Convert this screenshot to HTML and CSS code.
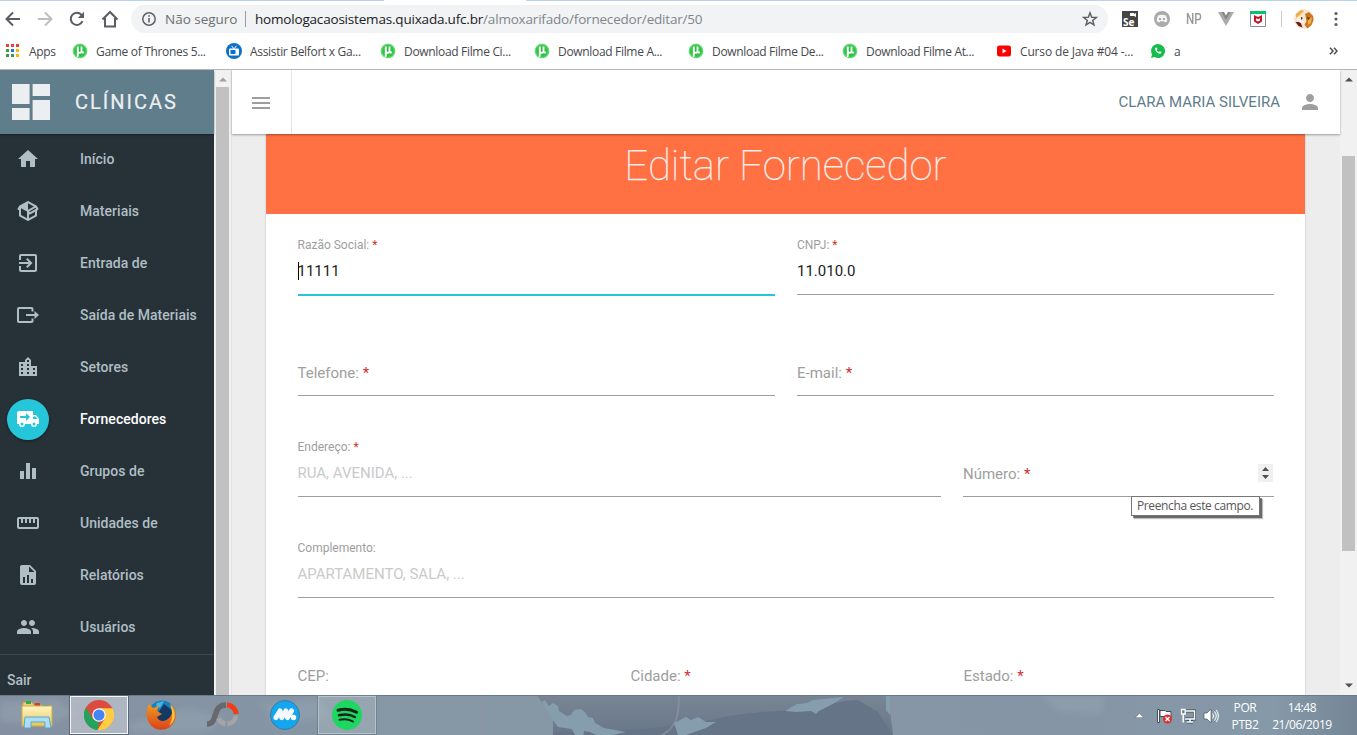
FILE: index.html
```html
<!DOCTYPE html>
<html lang="pt-BR">
<head>
<meta charset="utf-8">
<title>Editar Fornecedor</title>
<link rel="stylesheet" href="styles.css">
</head>
<body>
<svg class="defs" width="0" height="0" aria-hidden="true">
  <defs>
    <radialGradient id="green"><stop offset="0" stop-color="#1fae2f"/><stop offset=".75" stop-color="#35c94b"/><stop offset="1" stop-color="#8fe59b"/></radialGradient>
    <linearGradient id="folder" x2="0" y2="1"><stop offset="0" stop-color="#fff6c4"/><stop offset="1" stop-color="#e8c65c"/></linearGradient>
    <linearGradient id="fox" x2="0" y2="1"><stop offset="0" stop-color="#f39a20"/><stop offset="1" stop-color="#d8421b"/></linearGradient>
    <symbol id="ut" viewBox="0 0 16 16"><circle cx="8" cy="8" r="7.500" fill="url(#green)"/><path d="M5.800 3.500v8.700c0 .8-.4 1.300-1 1.300M5.800 8c0 2.400 3.700 2.400 3.700 0V3.500M9.500 8.200c.2 1.500 1.300 1.600 2.400 1" fill="none" stroke="#fff" stroke-width="1.900"/></symbol>
  </defs>
</svg>

<header class="chrome">
  <div class="tabline"></div>
  <div class="toolbar">
    <div class="nav">
      <svg width="16" height="16" viewBox="0 0 16 16"><path d="M15 8H2M8 1.500 1.500 8 8 14.500" fill="none" stroke="#5a5e62" stroke-width="2"/></svg>
      <svg width="16" height="16" viewBox="0 0 16 16"><path d="M1 8h13M8 1.500 14.500 8 8 14.500" fill="none" stroke="#bcbec1" stroke-width="2"/></svg>
      <svg width="16" height="16" viewBox="0 0 16 16"><path d="M13.500 10.200A6.100 6.100 0 1 1 12.500 3.800" fill="none" stroke="#5a5e62" stroke-width="2"/><path d="M15 .8V7H8.800z" fill="#5a5e62"/></svg>
      <svg width="18" height="18" viewBox="0 0 18 18"><path d="M1.500 9.500 9 2l7.500 7.500M4 8v8.500h10V8" fill="none" stroke="#5a5e62" stroke-width="2"/></svg>
    </div>
    <div class="omnibox">
      <svg width="16" height="16" viewBox="0 0 16 16"><circle cx="8" cy="8" r="6.200" fill="none" stroke="#5f6368" stroke-width="1.500"/><path d="M8 7v4.500M8 4.200v1.600" stroke="#5f6368" stroke-width="1.600"/></svg>
      <span class="insecure">Não seguro</span><i class="sep"></i>
      <span class="url"><span class="host">homologacaosistemas.quixada.ufc.br</span><span class="path">/almoxarifado/fornecedor/editar/50</span></span>
      <svg class="star" width="16" height="16" viewBox="0 0 16 16"><path d="m8 1.800 1.700 4.400 4.700.2-3.700 3 1.300 4.600L8 11.400 4 14l1.300-4.600-3.700-3 4.700-.2z" fill="none" stroke="#5a5e62" stroke-width="1.400"/></svg>
    </div>
    <div class="exts">
      <svg width="16" height="16" viewBox="0 0 16 16"><path fill="#454545" d="M0 0h16v16H0z"/><path fill="#fff" d="M8 2h4v1l2-1v4l-2-1v0H8z"/><text x="1" y="14.500" class="se">Se</text></svg>
      <svg width="16" height="16" viewBox="0 0 16 16"><circle cx="8" cy="8" r="8" fill="#aaa"/><path d="M4 4.500q4-1.600 8 0 1.500 3.500 1.200 6l-2.500 1-.8-1.200H6.100l-.8 1.200-2.500-1Q2.500 8 4 4.500z" fill="#f6f6f6"/><circle cx="6" cy="8" r="1.100" fill="#999"/><circle cx="10" cy="8" r="1.100" fill="#999"/></svg>
      <span class="np"><span>NP</span></span>
      <svg width="16" height="16" viewBox="0 0 16 16"><path fill="#aaa" d="M0 1h4l4 7 4-7h4L8 15z"/><path fill="#858585" d="M3.500 1H6l2 3.500L10 1h2.500L8 9z"/></svg>
      <svg width="16" height="16" viewBox="0 0 16 16"><path fill="#fff" stroke="#8b8b8b" d="M.5.5h15v15H.5z"/><path fill="#05c46b" d="M0 0h16v3H0z"/><path fill="#c2182b" d="m4 4 4 2 4-2v6.500L8 13l-4-2.500z"/><path d="m6 7.200 2 1 2-1v2.300l-2 1-2-1z" fill="#fff"/></svg>
      <i class="extsep"></i>
      <svg width="20" height="20" viewBox="0 0 20 20"><circle cx="10" cy="10" r="10" fill="#f6e6cf"/><path fill="#c97722" d="m11 5 4-2 4 4 .5 4-2 5-4 3.500-3-3.500 2-4z"/><path fill="#efb04c" d="m2 5 5-4 3 1-4 4-4 3zm12 6 4-3-1 6-3 2z"/><path fill="#6c1e18" d="m1.500 13 5 0 2 5.500-4-1.500zm5.500-5 2 1-2 2zm6 0 3 1-2 2z"/><path fill="#fff" d="m3 9 4 2 3 2-4 1z"/></svg>
      <svg class="dots" width="4" height="16" viewBox="0 0 4 16"><g fill="#5a5e62"><circle cx="2" cy="2.500" r="1.600"/><circle cx="2" cy="8" r="1.600"/><circle cx="2" cy="13.500" r="1.600"/></g></svg>
    </div>
  </div>
  <div class="bookmarks">
    <div class="bm apps"><svg width="14" height="14" viewBox="0 0 14 14"><path fill="#ea4335" d="M0 0h3v3H0zM5 0h3v3H5zM10 0h3v3h-3z"/><path fill="#34a04f" d="M0 5h3v3H0zM0 10h3v3H0z"/><path fill="#1a73e8" d="M5 5h3v3H5z"/><path fill="#34a04f" d="M5 10h3v3H5z"/><path fill="#fbb40a" d="M10 5h3v3h-3zM10 10h3v3h-3z"/></svg><span>Apps</span></div>
    <div class="bm"><svg width="16" height="16"><use href="#ut"/></svg><span>Game of Thrones 5...</span></div>
    <div class="bm"><svg width="16" height="16" viewBox="0 0 16 16"><circle cx="8" cy="8" r="8" fill="#0b70c9"/><rect x="3" y="5.500" width="10" height="7" rx="1" fill="#fff"/><path fill="#0b70c9" d="M4.500 7h5v4h-5z"/><path d="m5.500 2.800 2.500 3 2.500-3" stroke="#fff" fill="none"/></svg><span>Assistir Belfort x Ga...</span></div>
    <div class="bm"><svg width="16" height="16"><use href="#ut"/></svg><span>Download Filme Ci...</span></div>
    <div class="bm"><svg width="16" height="16"><use href="#ut"/></svg><span>Download Filme A...</span></div>
    <div class="bm"><svg width="16" height="16"><use href="#ut"/></svg><span>Download Filme De...</span></div>
    <div class="bm"><svg width="16" height="16"><use href="#ut"/></svg><span>Download Filme At...</span></div>
    <div class="bm java"><svg width="16" height="16" viewBox="0 0 16 16"><rect x="1" y="2.500" width="14" height="11" rx="2.500" fill="#f00"/><path fill="#fff" d="m6.500 5.500 4 2.500-4 2.500z"/></svg><span>Curso de Java #04 -...</span></div>
    <div class="bm"><svg width="16" height="16" viewBox="0 0 16 16"><path fill="#17bd4c" d="M8 1a7 7 0 1 1-3.400 13.100L1 15l1-3.500A7 7 0 0 1 8 1z"/><path d="M5.300 4.800c-1 3 3.300 7 5.700 5.500l.4-1.300-1.700-.8-.8.9C7.800 8.600 7 7.800 6.800 7l.6-.8-.6-1.700z" fill="#fff"/></svg><span>a</span></div>
    <svg class="more" width="9" height="8" viewBox="0 0 9 8"><path d="m1 .8 3 3.200-3 3.200M5 .8 8 4 5 7.200" fill="none" stroke="#4b4f53" stroke-width="1.500"/></svg>
  </div>
</header>

<div class="app">
  <aside class="sidebar">
    <div class="brand">
      <svg width="38" height="36" viewBox="0 0 38 36"><path fill="#eceff1" d="M0 0h17.600v20H0zM0 24h17.600v12H0zM20.600 0H38v12H20.600zM20.600 16H38v20H20.600z"/></svg>
      <span>CLÍNICAS</span>
    </div>
    <nav class="menu">
      <a class="item"><svg viewBox="0 0 24 24"><path d="M10 20v-6h4v6h5v-8h3L12 3 2 12h3v8z"/></svg><span>Início</span></a>
      <a class="item"><svg viewBox="0 0 24 24"><path d="M2 10.960a.985.985 0 0 1-.37-1.370L3.130 7c.11-.2.280-.340.470-.420l7.830-4.400c.160-.120.360-.180.570-.180s.410.060.570.180l7.900 4.440c.190.100.350.260.440.460l1.450 2.520c.280.480.110 1.090-.360 1.360l-1 .580v4.960c0 .380-.210.710-.530.880l-7.900 4.440c-.160.120-.360.180-.570.180s-.410-.060-.570-.180l-7.900-4.440A.991.991 0 0 1 3 16.500v-5.540c-.3.170-.68.180-1 0m10-6.810v6.700l5.960-3.350L12 4.150M5 15.910l6 3.380v-6.710L5 9.210v6.700m14 0v-3.220l-5 2.900c-.33.180-.7.170-1 .010v3.690l6-3.380m-5.150-2.550 6.280-3.630-.580-1.010-6.280 3.630.580 1.010z"/></svg><span>Materiais</span></a>
      <a class="item"><svg viewBox="0 0 24 24"><path d="M10.090 15.590 11.500 17l5-5-5-5-1.410 1.410L12.670 11H3v2h9.670l-2.580 2.590zM19 3H5a2 2 0 0 0-2 2v4h2V5h14v14H5v-4H3v4a2 2 0 0 0 2 2h14c1.100 0 2-.9 2-2V5c0-1.100-.9-2-2-2z"/></svg><span>Entrada de</span></a>
      <a class="item"><svg viewBox="0 0 24 24"><path d="M15.500 4H3A2 2 0 0 0 1 6v12a2 2 0 0 0 2 2h12.500a2 2 0 0 0 2-2v-2.500h-2V18H3V6h12.500v2.500h2V6a2 2 0 0 0-2-2zM10 11h8.500V8l4.500 4-4.500 4v-3H10z"/></svg><span>Saída de Materiais</span></a>
      <a class="item"><svg viewBox="0 0 24 24"><path d="M15 11V5l-3-3-3 3v2H3v14h18V11h-6zm-8 8H5v-2h2v2zm0-4H5v-2h2v2zm0-4H5V9h2v2zm6 8h-2v-2h2v2zm0-4h-2v-2h2v2zm0-4h-2V9h2v2zm0-4h-2V5h2v2zm6 12h-2v-2h2v2zm0-4h-2v-2h2v2z"/></svg><span>Setores</span></a>
      <a class="item active"><i class="disc"><svg viewBox="0 0 24 24"><path d="M3 4a2 2 0 0 0-2 2v11h2a3 3 0 0 0 6 0h6a3 3 0 0 0 6 0h2v-5l-3-4h-3V4H3m14 5.500h2.500l2 2.500H17V9.500M6 15.500a1.500 1.500 0 1 1 0 3 1.500 1.500 0 0 1 0-3m12 0a1.500 1.500 0 1 1 0 3 1.500 1.500 0 0 1 0-3M10 6l4 4-4 4v-3H4V9h6V6z"/></svg></i><span>Fornecedores</span></a>
      <a class="item"><svg viewBox="0 0 24 24"><path d="M10 20h4V4h-4v16zm-6 0h4v-8H4v8zM16 9v11h4V9h-4z"/></svg><span>Grupos de</span></a>
      <a class="item"><svg viewBox="0 0 24 24"><path d="M21 6H3c-1.100 0-2 .9-2 2v8c0 1.100.9 2 2 2h18c1.100 0 2-.9 2-2V8c0-1.100-.9-2-2-2zm0 10H3V8h2v4h2V8h2v4h2V8h2v4h2V8h2v4h2V8h2v8z"/></svg><span>Unidades de</span></a>
      <a class="item"><svg viewBox="0 0 24 24"><path d="M13 9h5.500L13 3.500V9M6 2h8l6 6v12a2 2 0 0 1-2 2H6a2 2 0 0 1-2-2V4c0-1.110.89-2 2-2m1 18h2v-6H7v6m4 0h2v-8h-2v8m4 0h2v-4h-2v4z"/></svg><span>Relatórios</span></a>
      <a class="item"><svg viewBox="0 0 24 24"><path d="M16 11c1.660 0 2.990-1.340 2.990-3S17.660 5 16 5s-3 1.340-3 3 1.340 3 3 3zm-8 0c1.660 0 2.990-1.340 2.990-3S9.660 5 8 5 5 6.340 5 8s1.340 3 3 3zm0 2c-2.330 0-7 1.170-7 3.500V19h14v-2.500c0-2.330-4.670-3.500-7-3.500zm8 0c-.290 0-.620.020-.970.050 1.160.840 1.970 1.970 1.970 3.450V19h6v-2.500c0-2.330-4.670-3.500-7-3.500z"/></svg><span>Usuários</span></a>
    </nav>
    <a class="logout">Sair</a>
  </aside>
  <div class="sidescroll"><svg width="8" height="5" viewBox="0 0 8 5"><path fill="#a0a0a0" d="M0 4.500h8L4 .5z"/></svg><i></i></div>

  <main class="page">
    <div class="topbar">
      <div class="burger"><i></i><i></i><i></i></div>
      <span class="user">CLARA MARIA SILVEIRA</span>
      <svg class="person" width="24" height="24" viewBox="0 0 24 24"><path fill="#9e9e9e" d="M12 12c2.210 0 4-1.790 4-4s-1.790-4-4-4-4 1.790-4 4 1.790 4 4 4zm0 2c-2.670 0-8 1.340-8 4v2h16v-2c0-2.660-5.330-4-8-4z"/></svg>
    </div>
    <section class="card">
      <h1>Editar Fornecedor</h1>
      <form class="form">
        <div class="row two">
          <div class="field focus"><label class="up">Razão Social: <b>*</b></label><div class="value"><i class="caret"></i>11111</div></div>
          <div class="field"><label class="up">CNPJ: <b>*</b></label><div class="value">11.010.0</div></div>
        </div>
        <div class="row two">
          <div class="field"><label>Telefone: <b>*</b></label></div>
          <div class="field"><label>E-mail: <b>*</b></label></div>
        </div>
        <div class="row address">
          <div class="field"><label class="up">Endereço: <b>*</b></label><div class="value hint">RUA, AVENIDA, ...</div></div>
          <div class="field number"><label>Número: <b>*</b></label>
            <div class="spin"><svg width="7" height="14" viewBox="0 0 7 14"><path fill="#505050" d="M0 5h7L3.500 1zM0 9h7l-3.500 4z"/></svg></div>
            <div class="tooltip">Preencha este campo.</div>
          </div>
        </div>
        <div class="row">
          <div class="field"><label class="up">Complemento:</label><div class="value hint">APARTAMENTO, SALA, ...</div></div>
        </div>
        <div class="row three">
          <div class="field"><label>CEP:</label></div>
          <div class="field"><label>Cidade: <b>*</b></label></div>
          <div class="field"><label>Estado: <b>*</b></label></div>
        </div>
      </form>
    </section>
  </main>
  <div class="mainscroll">
    <svg width="8" height="5" viewBox="0 0 8 5"><path fill="#505050" d="M0 4.500h8L4 .5z"/></svg>
    <i></i>
    <svg width="8" height="5" viewBox="0 0 8 5"><path fill="#505050" d="M0 .5h8L4 4.500z"/></svg>
  </div>
</div>

<footer class="taskbar">
  <svg class="wall" width="1357" height="40" viewBox="0 0 1357 40">
    <defs><linearGradient id="sky"><stop offset="0" stop-color="#8490a2"/><stop offset=".3" stop-color="#8697a5"/><stop offset=".8" stop-color="#8695a5"/><stop offset=".94" stop-color="#8599a8"/><stop offset="1" stop-color="#748696"/></linearGradient>
    <linearGradient id="slope" x2="0" y2="1"><stop offset="0" stop-color="#788594"/><stop offset="1" stop-color="#687789"/></linearGradient>
    <filter id="haze" x="-10%" y="-50%" width="120%" height="200%"><feGaussianBlur stdDeviation="3"/></filter></defs>
    <path fill="url(#sky)" d="M0 0h1357v40H0z"/>
    <path filter="url(#haze)" fill="#93a2af" opacity=".6" d="m0 8 55-4 20 14-30 12-45-4zm130 20 60-15 35 10-20 14h-75zm130-20 60-3 10 17-50 8zM1040 0h65l-5 20-40-3z"/>
    <path fill="url(#slope)" d="M537 0h348l5 16 3 24H553V25z"/>
    <path fill="#657486" d="M553 37q90 0 150-10 30-8 60-10l45-3 37-8 13-1 20 12 14 23H553z"/>
    <path fill="#869dae" d="m542 7 3-2 4 6 4-3 5 3 1 5 8 5 4-1 3-5 7-1 4 3 3 5 5 1 2 5 9 5 22 4-13 3-13 2-10-5-6-1-1 8-7-2-4-8-14-2-6-8-7-11zM674 28l12-6 5 3 7-3 8 5h10l-10 6-20 7h-8zM785 16l12-7 10-1 6-3 31-3-13 8-12 6-3 3-5-3-15 1zM886 0h4v20l-4-5z"/>
    <path d="M679 0c0 20-2 32-17 40M481 0q3 18-1 40" fill="none" stroke="#9292a1" stroke-width="2" opacity=".6"/>
    <path d="M0 .5h1357" stroke="#6b7986"/>
  </svg>
  <div class="launch">
    <div class="slot folder"><svg width="32" height="30" viewBox="0 0 32 30"><path d="M2 2h9l2 3h15v5H1z" fill="#e9d078" stroke="#b99a43"/><path fill="#2faa48" d="M5 1h5v3H5z"/><path fill="#df3a27" d="M14 3h5v3h-5z"/><path fill="#30a4df" d="M21 5h6v3h-6z"/><path d="M1 6h30v20H1z" fill="url(#folder)" stroke="#d1ac4b"/><path d="M4 17h24l2 11h-6v-6H10v6H3z" fill="#a9def5" stroke="#5ca7cc"/></svg></div>
    <div class="slot on"><svg width="30" height="30" viewBox="0 0 30 30"><circle cx="15" cy="15" r="15" fill="#db4b3f"/><path fill="#23a35c" d="M2 7.500 8.500 18.500 15 22l-1.500 8A15 15 0 0 1 2 7.500z"/><path fill="#ffcd43" d="M15 8.300h13.500A15 15 0 0 1 13.500 30l7.300-11.500z"/><circle cx="15" cy="15" r="6.800" fill="#f4f4f4"/><circle cx="15" cy="15" r="5.500" fill="#4385f5"/></svg></div>
    <div class="slot"><svg width="30" height="30" viewBox="0 0 30 30"><circle cx="16" cy="14" r="13.500" fill="#187ec0"/><path fill="#143963" d="m18 4 9 7-2 12-10 2-5-9z"/><path fill="#4ab6dd" d="m11 3 7-2-4 7-4-2z"/><path fill="url(#fox)" d="M3 4l4 4 6-2-2 5 5 3-5 3c2 5 8 5 12 1 4-4 4-9 2-14 4 4 6 10 4 16a14.500 14.500 0 0 1-28-2C-.5 13 1 8 3 4z"/><path fill="#f9c335" d="M24 4c7 8 6 17-1 22 4-7 4-13 1-22z"/></svg></div>
    <div class="slot"><svg width="32" height="26" viewBox="0 0 32 26"><path d="M0 22c12 0 4-19 19-19" fill="none" stroke="#68696c" stroke-width="5.500"/><path d="M20 2.800a10 10 0 0 1 9.200 9.200" fill="none" stroke="#f13c16" stroke-width="5"/><path d="M29 13.500A10 10 0 0 1 20.500 22M18.500 22a10 10 0 0 1-7-5.500" fill="none" stroke="#a4a3a5" stroke-width="5"/></svg></div>
    <div class="slot"><svg width="30" height="30" viewBox="0 0 30 30"><circle cx="15" cy="15" r="14.500" fill="#14a6ee" stroke="#377ca7"/><path d="m6 17.500 4-6.500m1.800 6.500L15.800 11m1.800 6.500L21.500 11" fill="none" stroke="#f5f9fc" stroke-width="5" stroke-linecap="round"/><circle cx="23.500" cy="17.500" r="2.700" fill="#fff"/></svg></div>
    <div class="slot open"><svg width="30" height="30" viewBox="0 0 30 30"><circle cx="15" cy="15" r="15" fill="#1ed760"/><g fill="none" stroke="#17241b" stroke-linecap="round"><path d="M6 10.300q10-2.700 18.500 2" stroke-width="3"/><path d="M7 15.300q9-2.300 15.800 1.700" stroke-width="2.500"/><path d="M7.500 19.800q7.500-1.700 13.500 1.700" stroke-width="2"/></g></svg></div>
  </div>
  <div class="tray">
    <svg width="9" height="5" viewBox="0 0 9 5"><path fill="#fff" stroke="#596977" stroke-width=".6" d="M0 4.700h9L4.500.3z"/></svg>
    <svg width="17" height="18" viewBox="0 0 17 18"><path fill="#fff" stroke="#414d57" d="M1.500 2.500h2v13h-2zM4 3.500h5l1 1h5v6h-6l-1-1H4z"/><circle cx="11.500" cy="12" r="4.500" fill="#df2f2c"/><path d="m9.500 10 4 4m0-4-4 4" stroke="#fff" stroke-width="1.500"/></svg>
    <svg width="16" height="16" viewBox="0 0 16 16"><path fill="none" stroke="#3f4c57" stroke-width="3" d="M6 3h8.500v8H5M7 14h6"/><path fill="none" stroke="#fff" stroke-width="1.500" d="M6 3h8.500v8H5M7 14h6m-3-3v3M3.200 6v8.500"/><path fill="#6e7d89" stroke="#fff" stroke-width="1.300" d="M1.500 1.500h3.600v4.500H1.500z"/></svg>
    <svg width="16" height="16" viewBox="0 0 16 16"><path fill="#fff" stroke="#4c5963" stroke-width=".7" d="M1 5h3l4-4v14l-4-4H1z"/><path d="M9.500 5.500q2 2.500 0 5M11.500 3.500q3.500 4.500 0 9M13.300 2q4.200 6 0 12" fill="none" stroke="#f4f8fa" stroke-width="1.100"/></svg>
    <div class="clock lang"><span>POR</span><span>PTB2</span></div>
    <div class="clock"><span>14:48</span><span>21/06/2019</span></div>
  </div>
</footer>
</body>
</html>
```
FILE: styles.css
```css
* { box-sizing: border-box; }
body { margin: 0; width: 1357px; height: 735px; overflow: hidden; display: flex; flex-direction: column; font-family: Roboto, sans-serif; background: #fff; }
svg { display: block; flex: none; }
.defs { position: absolute; }

/* Browser chrome */
.chrome { height: 70px; flex: none; border-bottom: 1px solid #b6b4b6; font-family: "Open Sans", "Noto Sans", sans-serif; }
.tabline { height: 1px; background: linear-gradient(90deg, #b8d2ea 384px, #fff 384px, #fff 526px, #b8d2ea 526px); }
.toolbar { height: 36px; display: flex; align-items: center; }
.nav { width: 131px; padding-left: 5px; display: flex; gap: 16px; align-items: center; }
.omnibox { width: 977px; height: 28px; border-radius: 14px; background: #f1f3f4; display: flex; align-items: center; padding: 0 10px; font-size: 13.5px; white-space: nowrap; }
.insecure { margin-left: 8px; width: 71px; color: #6b6f73; letter-spacing: -.02px; }
.sep { width: 1px; height: 16px; margin: 0 9px; background: #9b9ea1; }
.url { letter-spacing: -.19px; }
.host { color: #202124; }
.path { color: #80868b; }
.star { margin-left: auto; }
.exts { display: flex; align-items: center; padding-left: 14px; gap: 16px; }
.se { font: bold 10px "Open Sans", sans-serif; fill: #fff; }
.np { width: 16px; font: 500 15px/16px Roboto, sans-serif; color: #989898; }
.np span { display: inline-block; transform: scaleX(.78); transform-origin: 0 50%; }
.extsep { width: 1px; height: 16px; background: #ccc; margin-right: -4px; margin-left: -1px; }
.dots { margin-left: 4px; }
.bookmarks { height: 28px; display: flex; align-items: center; padding-left: 6px; font-size: 12px; color: #46494d; }
.bm { width: 154px; display: flex; align-items: center; gap: 8px; white-space: nowrap; letter-spacing: -.32px; }
.bm.apps { width: 66px; gap: 9px; }
.bm.java { letter-spacing: -.15px; }
.more { margin-left: 25px; }

/* Application */
.app { height: 625px; flex: none; display: flex; overflow: hidden; }
.sidebar { width: 214px; background: #263238; color: #b0bec5; }
.brand { height: 64px; background: #607d8b; display: flex; align-items: center; padding-left: 12px; gap: 25px; font-size: 20px; letter-spacing: 2px; color: #eceff1; font-weight: 400; -webkit-text-stroke: .2px #eceff1; box-shadow: 0 1px 2px rgba(0,0,0,.4); position: relative; }
.menu { height: 520px; }
.item { height: 52px; display: flex; align-items: center; padding: 0 0 2px 16px; gap: 40px; font-size: 14px; font-weight: 500; white-space: nowrap; letter-spacing: .03px; }
.item svg { width: 24px; height: 24px; fill: currentColor; }
.item.active { padding-left: 7px; gap: 31px; color: #fff; }
.disc { width: 42px; height: 41px; border-radius: 50%; background: #26c6da; display: flex; align-items: center; justify-content: center; box-shadow: 0 1px 3px rgba(0,0,0,.4); }
.logout { display: block; height: 41px; border-top: 1px solid #37474f; padding: 10px 7px; font: 500 14px/31px Roboto, sans-serif; }
.sidescroll { width: 18px; background: #f1f1f1; display: flex; flex-direction: column; padding: 7px 2px 0 2px; border-right: 1px solid #e3e3e3; }
.sidescroll svg { margin: 0 0 5px 3px; }
.sidescroll i { flex: 1; background: #c1c1c1; }
.page { width: 1108px; background: #ededed; }
.topbar { height: 64px; background: #fff; display: flex; align-items: center; position: relative; box-shadow: 0 1px 2px rgba(0,0,0,.35); }
.burger { width: 60px; height: 64px; border-right: 1px solid #e5e5e5; display: flex; flex-direction: column; justify-content: center; gap: 3px; padding: 2px 0 0 20px; }
.burger i { width: 18px; height: 2px; background: #9e9e9e; }
.user { margin-left: auto; font-size: 15px; color: #607d8b; }
.person { margin: 0 18px 0 18px; }
.card { margin-left: 34px; width: 1039px; background: #fff; box-shadow: 0 0 2px rgba(0,0,0,.2); }
h1 { margin: 0; height: 80px; padding-top: 5px; background: #ff7043; color: #f8eeeb; font: 100 42px/54px Roboto, sans-serif; -webkit-text-stroke: .25px #f8eeeb; text-align: center; }
.form { padding: 20px 31px 0 31.500px; }
.row { display: grid; column-gap: 22.500px; margin-bottom: 40px; }
.two { grid-template-columns: 1fr 1fr; }
.address { grid-template-columns: 643px 1fr; }
.three { grid-template-columns: 1fr 1fr 1fr; }
.field { height: 61px; border-bottom: 1px solid #9e9e9e; font-size: 15px; color: #9e9e9e; position: relative; }
.field label { display: block; line-height: 20px; padding-top: 28px; }
.field label.up { font-size: 12px; padding-top: 1px; }
.field b { color: #d32f2f; font-weight: 400; }
.value { color: #212121; line-height: 20px; padding-top: 6px; }
.value.hint { color: #cacaca; }
.focus { border-color: #26c6da; box-shadow: 0 1px #26c6da; }
.caret { position: absolute; left: 0; top: 28px; width: 1px; height: 18px; background: #000; }
.spin { position: absolute; right: 1px; top: 28px; width: 15px; height: 18px; background: #f0f0f0; display: flex; align-items: center; justify-content: center; }
.tooltip { position: absolute; left: 168px; top: 60px; width: 129px; height: 20px; border: 1px solid #767676; background: #fff; color: #575757; font: 12px/18px "Open Sans", sans-serif; letter-spacing: -.38px; padding-left: 5px; box-shadow: 2px 2px 0 rgba(0,0,0,.45), 3px 3px 1px rgba(0,0,0,.25); white-space: nowrap; z-index: 2; }
.mainscroll { width: 17px; background: #f1f1f1; display: flex; flex-direction: column; padding: 7px 2px; }
.mainscroll svg { margin-left: 3px; }
.mainscroll i { height: 395px; margin: 74px 0 auto; background: #c1c1c1; }

/* Windows taskbar */
.taskbar { height: 40px; flex: none; display: flex; justify-content: space-between; position: relative; color: #fff; }
.wall { position: absolute; inset: 0; }
.launch { position: relative; display: flex; padding: 1px 0 0 8px; gap: 4px; }
.slot { width: 58px; height: 38px; display: flex; align-items: center; justify-content: center; }
.on { border: 1px solid #f4f6f7; background: rgba(215,218,224,.5); outline: 1px solid #5d6875; }
.open { border: 1px solid #b8c2ca; background: rgba(190,202,205,.3); outline: 1px solid #70808d; }
.tray { position: relative; display: flex; align-items: center; gap: 7px; font: 12px/17px "Open Sans", sans-serif; padding: 1px 25px 0 0; }
.tray > svg:first-child { margin-right: 5px; }
.clock { display: flex; flex-direction: column; align-items: center; width: 60px; letter-spacing: -.4px; }
.clock.lang { width: 34px; margin: 0 3px 0 2px; }
```
